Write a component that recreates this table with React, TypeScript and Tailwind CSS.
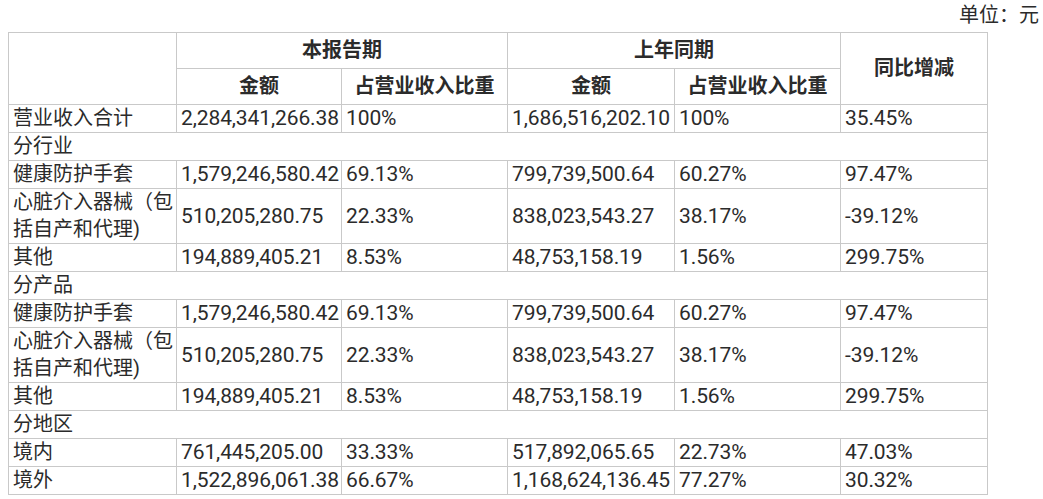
import React from "react";

type Row =
  | { kind: "section"; label: string }
  | { kind: "data"; label: React.ReactNode; cells: string[]; tall?: boolean };

const rows: Row[] = [
  { kind: "data", label: "营业收入合计", cells: ["2,284,341,266.38", "100%", "1,686,516,202.10", "100%", "35.45%"] },
  { kind: "section", label: "分行业" },
  { kind: "data", label: "健康防护手套", cells: ["1,579,246,580.42", "69.13%", "799,739,500.64", "60.27%", "97.47%"] },
  { kind: "data", label: "心脏介入器械（包括自产和代理)", cells: ["510,205,280.75", "22.33%", "838,023,543.27", "38.17%", "-39.12%"], tall: true },
  { kind: "data", label: "其他", cells: ["194,889,405.21", "8.53%", "48,753,158.19", "1.56%", "299.75%"] },
  { kind: "section", label: "分产品" },
  { kind: "data", label: "健康防护手套", cells: ["1,579,246,580.42", "69.13%", "799,739,500.64", "60.27%", "97.47%"] },
  { kind: "data", label: "心脏介入器械（包括自产和代理)", cells: ["510,205,280.75", "22.33%", "838,023,543.27", "38.17%", "-39.12%"], tall: true },
  { kind: "data", label: "其他", cells: ["194,889,405.21", "8.53%", "48,753,158.19", "1.56%", "299.75%"] },
  { kind: "section", label: "分地区" },
  { kind: "data", label: "境内", cells: ["761,445,205.00", "33.33%", "517,892,065.65", "22.73%", "47.03%"] },
  { kind: "data", label: "境外", cells: ["1,522,896,061.38", "66.67%", "1,168,624,136.45", "77.27%", "30.32%"] },
];

const base = "border border-[#c9c9c9] pl-[4px] pr-0 py-0 leading-[27px] align-middle";
const num = base + " whitespace-nowrap text-[21px] tracking-[-0.1px]";
const th = "border border-[#c9c9c9] py-[4px] px-0 leading-[27px] font-bold text-center align-middle";

export default function App() {
  return (
    <div className="w-[1043px] h-[499px] bg-white text-[#2b2b2b] text-[20px] font-['Roboto','Noto_Sans_CJK_SC',sans-serif] overflow-hidden">
      <div className="text-right pr-[4px] pt-[2px] h-[32px] leading-[27px]">单位：元</div>
      <table className="ml-[8px] w-[979px] table-fixed border-collapse">
        <colgroup>
          <col className="w-[168px]" />
          <col className="w-[165px]" />
          <col className="w-[166px]" />
          <col className="w-[167px]" />
          <col className="w-[166px]" />
          <col className="w-[147px]" />
        </colgroup>
        <thead>
          <tr>
            <th rowSpan={2} className={th}></th>
            <th colSpan={2} className={th}>本报告期</th>
            <th colSpan={2} className={th}>上年同期</th>
            <th rowSpan={2} className={th}>同比增减</th>
          </tr>
          <tr>
            <th className={th}>金额</th>
            <th className={th}>占营业收入比重</th>
            <th className={th}>金额</th>
            <th className={th}>占营业收入比重</th>
          </tr>
        </thead>
        <tbody>
          {rows.map((r, i) =>
            r.kind === "section" ? (
              <tr key={i}>
                <td colSpan={6} className={base + " whitespace-nowrap"}>{r.label}</td>
              </tr>
            ) : (
              <tr key={i}>
                <td className={base + (r.tall ? " whitespace-normal break-all" : " whitespace-nowrap")}>
                  {r.label}
                </td>
                {r.cells.map((c, j) => (
                  <td key={j} className={num}>{c}</td>
                ))}
              </tr>
            )
          )}
        </tbody>
      </table>
    </div>
  );
}
